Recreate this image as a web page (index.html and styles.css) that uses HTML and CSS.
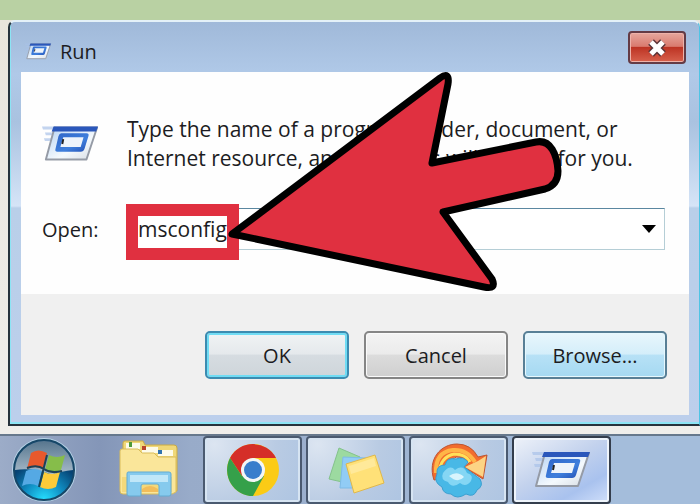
FILE: index.html
```html
<!doctype html>
<html lang="en">
<head>
	<meta charset="UTF-8">
	<title>Run</title>
	<link rel="stylesheet" href="styles.css">
</head>
<body>
	<svg class="defs" width="0" height="0" aria-hidden="true">
		<defs>
			<linearGradient id="frameBlue" x1="0" y1="0" x2="1" y2="1">
				<stop offset="0" stop-color="#2f66c8"/>
				<stop offset=".6" stop-color="#3f7fdc"/>
				<stop offset="1" stop-color="#2450b4"/>
			</linearGradient>
			<linearGradient id="paper" x1="0" y1="0" x2="1" y2="1">
				<stop offset="0" stop-color="#b4d2f4"/>
				<stop offset=".6" stop-color="#f4f9fd"/>
				<stop offset="1" stop-color="#d5dbe2"/>
			</linearGradient>
			<symbol id="runIcon" viewBox="0 0 60 40">
				<path d="M0 2h14l-1 3H1zM3 8h9l-1 3H4zM2 14h8l-2 3H3z" fill="#a9c2e8" opacity=".7"/>
				<path d="M13 3h44L46 36H4z" fill="url(#paper)" stroke="#959ba6" stroke-width="2" stroke-linejoin="round"/>
				<path d="M12 2h46l-2 5H10z" fill="#2a57bb"/>
				<path d="M20 9h26q3 0 2 3l-4 13q-1 3-4 3H16q-3 0-2-3l3-13q1-3 3-3z" fill="url(#frameBlue)"/>
				<path d="M22 13h21l-3 10H19z" fill="#eef4fb"/>
				<path d="M22 15l-1 5" stroke="#222" stroke-width="2"/>
			</symbol>
		</defs>
	</svg>

	<div class="wallpaper"></div>
	<div class="desktop">
		<div class="window">
			<div class="titlebar">
				<svg class="title_icon"><use href="#runIcon"/></svg>
				<span class="title">Run</span>
				<button class="close" aria-label="Close">
					<svg width="22" height="20" viewBox="0 0 22 20">
						<path d="M5 4l12 12M17 4L5 16" stroke="#5c3438" stroke-width="8"/>
						<path d="M5 4l12 12M17 4L5 16" stroke="#fff" stroke-width="5"/>
					</svg>
				</button>
			</div>
			<form class="content" onsubmit="return false">
				<div class="main">
					<svg class="run_icon"><use href="#runIcon"/></svg>
					<p class="info">Type the name of a program, folder, document, or<br>Internet resource, and Windows will open it for you.</p>
					<label for="open">Open:</label>
					<div class="combo">
						<input type="text" id="open" value="msconfig">
						<button type="button" class="drop" aria-label="Show list">
							<svg width="14" height="8" viewBox="0 0 14 8"><path d="M0 0h14L7 8z"/></svg>
						</button>
						<span class="mark"></span>
						<svg class="arrow" viewBox="220 60 350 240">
							<path d="M232 234L440 78Q450 71 448 84L432 163L536 142C551 139 557 155 558 171Q558 185 545 189L443 212L492 279Q497 290 484 287Z" fill="#e03040" stroke="#000" stroke-width="7" stroke-linejoin="round"/>
						</svg>
					</div>
				</div>
				<div class="buttons">
					<button class="btn default">OK</button>
					<button type="button" class="btn">Cancel</button>
					<button type="button" class="btn hot">Browse...</button>
				</div>
			</form>
		</div>
	</div>

	<div class="taskbar">
		<button class="start" aria-label="Start">
			<svg width="66" height="66" viewBox="0 0 66 66">
				<defs>
					<linearGradient id="orbTop" x1="0" y1="0" x2="0" y2="1">
						<stop offset="0" stop-color="#57768e"/>
						<stop offset="1" stop-color="#a9bccb"/>
					</linearGradient>
					<radialGradient id="orbLow" cx=".5" cy="1" r=".65">
						<stop offset="0" stop-color="#26e0ff"/>
						<stop offset=".5" stop-color="#108fc4"/>
						<stop offset="1" stop-color="#064273"/>
					</radialGradient>
				</defs>
				<circle cx="33" cy="33" r="32" fill="#b8d4e8"/>
				<circle cx="33" cy="33" r="30" fill="url(#orbLow)" stroke="#174767" stroke-width="2"/>
				<path d="M4 33a29 29 0 0 1 58 0q-12 1-20 5-20-8-38-5z" fill="url(#orbTop)"/>
				<path d="M20 16q7-5 16 0l-4 16q-8-4-16 0z" fill="#e7592d"/>
				<path d="M38 18q8 4 16 0l-4 15q-8 4-16 0z" fill="#86bd4a"/>
				<path d="M15 34q8-4 16 0l-4 15q-8-4-16 0z" fill="#55a9e4"/>
				<path d="M33 35q8 4 16 0l-4 15q-8 4-16 0z" fill="#fccb39"/>
				<path d="M16 31q10-4 17 1t18 2M36 18L28 50" fill="none" stroke="#1d4256" stroke-width="2"/>
			</svg>
		</button>
		<button class="pin" aria-label="Windows Explorer">
			<svg width="62" height="62" viewBox="0 0 62 62">
				<path d="M5 4q0-2 2-2h18l2 4h29q3 0 3 3v43H5z" fill="#f0d878" stroke="#c9aa45"/>
				<path d="M8 4h14v6H8zM24 8h16v6H24zM40 11h15v6H40z" fill="#fdfbe9"/>
				<path d="M11 3h3v5h-3z" fill="#4f9a38"/>
				<path d="M24 7h4v4h-4z" fill="#b8442c"/>
				<path d="M40 11h4v4h-4z" fill="#3073ae"/>
				<path d="M2 12q0-2 2-2h16l4 4h12l4 4h18v35l-4 2H5q-3 0-3-3z" fill="#fae69a" stroke="#d9bc5a"/>
				<path d="M4 38h50v15H4z" fill="#f4d97b"/>
				<path d="M10 33h41q2 0 2 2v20q0 2-2 2H41V47q0-2-2-2H25q-2 0-2 2v10H11q-2 0-2-2V35q0-2 1-2z" fill="#86caed" stroke="#63abd2"/>
				<path d="M12 36h38v7H12z" fill="#c0e7f8"/>
				<path d="M24 50q8-6 16 0v3H24z" fill="#f2bd5a"/>
			</svg>
		</button>
		<button class="task" aria-label="Google Chrome">
			<svg width="56" height="56" viewBox="0 0 56 56">
				<circle cx="28" cy="28" r="26" fill="#fbcb16"/>
				<path d="M5 16A26 26 0 0 1 51 16H28L17 34z" fill="#d52e28"/>
				<path d="M5 16A26 26 0 0 0 28 54L39 34H17z" fill="#35a04a"/>
				<circle cx="28" cy="28" r="12" fill="#f4f6f6"/>
				<circle cx="28" cy="28" r="9" fill="#397dcc"/>
			</svg>
		</button>
		<button class="task" aria-label="Sticky Notes">
			<svg width="60" height="56" viewBox="0 0 60 56">
				<path d="M13 6l21 9-9 27L3 37z" fill="#9cdaa0" stroke="#84c28c"/>
				<path d="M17 15l23 1v30H14z" fill="#91ccf5" stroke="#7dbbe6"/>
				<path d="M20 22l29-9 9 28-30 10z" fill="#ffe178" stroke="#e0b84b"/>
				<path d="M23 24l25-8 2 8-25 8z" fill="#ffe99a"/>
			</svg>
		</button>
		<button class="task" aria-label="Cloud">
			<svg width="60" height="56" viewBox="0 0 60 56">
				<path d="M5 38C-2 17 12 2 28 2q14 0 21 13l9-2-4 24-19-12 6-5Q26 8 17 24q-6 5-7 13z" fill="#f26c2e" stroke="#bc5532"/>
				<path d="M7 31Q6 10 24 8q14-1 22 12" fill="none" stroke="#ffb547" stroke-width="4"/>
				<path d="M10 32Q11 15 25 12q12 0 16 8" fill="none" stroke="#ffe05a" stroke-width="3"/>
				<path d="M36 25l13-6 8-5-3 21z" fill="#fcd485"/>
				<path d="M13 45Q4 40 8 32q-1-9 8-9 2-8 11-6 7-3 12 3l-4 5 16 12q4 7-3 11-3 8-11 4-9 6-15 0-8 0-9-7z" fill="#48b8e6" stroke="#3b9fd0"/>
				<path d="M14 31q7-9 12-3 8-6 12 3 7 2 4 8-5 7-11 2-8 6-12-1-8-2-5-9z" fill="#84d6f4"/>
				<path d="M20 34q8-6 15 1-6 7-15-1z" fill="#d8f4fd"/>
			</svg>
		</button>
		<button class="task active" aria-label="Run">
			<svg width="60" height="40"><use href="#runIcon"/></svg>
		</button>
	</div>
</body>
</html>
```

FILE: styles.css
```css
*{
	box-sizing: border-box;
	margin: 0;
	padding: 0;
}
body{
	display: flex;
	flex-direction: column;
	min-height: 100vh;
	background: #eeece8;
	font-family: "Noto Sans", "Open Sans", sans-serif;
	font-family: "Open Sans", "Noto Sans", sans-serif;
	font-size: 20px;
	color: #1c1c22;
}
button,input{
	font: inherit;
	color: inherit;
}
svg{
	display: block;
	flex-shrink: 0;
}
.defs{
	position: absolute;
}
.wallpaper{
	height: 20px;
	background: #b9d1a3;
}
.desktop{
	flex: 1;
	padding: 0 0 7px 8px;
	background: linear-gradient(#e9e5dc, #efeeeb);
}
.window{
	padding: 0 10px 9px 11px;
	border: 2px solid #26323c;
	border-top-color: #e4f1f8;
	border-right: 1px solid #4fc4e4;
	border-radius: 7px 7px 0 0;
	background: linear-gradient(#a0b9d9, #b0c9e8 52px, #a9c2e0 100px, #d5e4f7 184px, #b9cfe9 186px, #bccfec);
	box-shadow: inset 1px -2px 0 #8ce4f4;
}
.titlebar{
	display: flex;
	align-items: center;
	height: 50px;
	padding: 9px 3px 0 4px;
}
.title_icon{
	width: 27px;
	height: 19px;
}
.title{
	flex: 1;
	padding: 0 8px;
}
.close{
	display: flex;
	align-items: center;
	justify-content: center;
	width: 58px;
	height: 33px;
	margin-bottom: 8px;
	border: 2px solid #643b45;
	border-radius: 4px;
	background: linear-gradient(#e6a79d, #d97a6e 46%, #bd3424 50%, #d7614d);
	box-shadow: inset 0 0 0 1px #eeb2a9;
}
.content{
	background: #f0f0f0;
}
.main{
	display: grid;
	grid-template-columns: 85px 1fr;
	row-gap: 35px;
	align-items: center;
	padding: 43px 24px 44px 21px;
	background: #fefefe;
}
.run_icon{
	width: 58px;
	height: 40px;
}
.info{
	font-size: 21px;
	line-height: 29px;
	white-space: nowrap;
}
.combo{
	position: relative;
	display: flex;
	height: 42px;
	border: 1px solid #b5ced6;
	border-top-color: #5a87a0;
	background: #fff;
}
.combo input{
	flex: 1;
	min-width: 0;
	padding: 0 10px;
	border: none;
	outline: none;
	background: none;
	font-size: 21px;
}
.drop{
	display: flex;
	align-items: center;
	justify-content: center;
	width: 30px;
	border: none;
	background: none;
}
/* red frame round the typed command */
.mark{
	position: absolute;
	left: -2px;
	top: -5px;
	width: 113px;
	height: 56px;
	border: 12px solid #e03040;
}
.arrow{
	position: absolute;
	left: 92px;
	top: -149px;
	width: 350px;
	height: 240px;
	pointer-events: none;
}
.buttons{
	display: flex;
	justify-content: flex-end;
	gap: 15px;
	padding: 37px 22px 36px;
}
.btn{
	width: 144px;
	height: 48px;
	border: 2px solid #858585;
	border-radius: 5px;
	background: linear-gradient(#f3f3f3, #ebebeb 48%, #dcdcdc 50%, #cfcfcf);
	box-shadow: inset 0 0 0 1px #fafafa;
}
.btn.default{
	border-color: #3c8bb0;
	background: linear-gradient(#f0f3f4, #e5e9ec 48%, #d6dce1 50%, #ced5da);
	box-shadow: inset 0 0 0 2px #70dcf4;
}
.btn.hot{
	border-color: #587f96;
	background: linear-gradient(#e8f6fc, #d4eefa 48%, #b7e1f6 50%, #a5d9f2);
	box-shadow: inset 0 0 0 1px #e6f8fe;
}
.taskbar{
	display: flex;
	gap: 4px;
	height: 70px;
	border-top: 2px solid #66788c;
	background: linear-gradient(90deg, #9cacc8, #8496b8 100px, #98abc9 190px, #a4bddb 620px);
}
.start,.pin,.task{
	display: flex;
	align-items: center;
	justify-content: center;
	border: none;
	background: none;
}
.start{
	width: 87px;
}
.pin{
	width: 108px;
	padding-left: 8px;
}
.task{
	width: 99px;
	border: 2px solid #4a5a70;
	border-radius: 4px;
	background: radial-gradient(circle at 10% 10%, #dce5f1, #b9cbe3 60%, #aec5e2);
	box-shadow: inset 0 0 0 2px #d6e4f2;
}
.task.active{
	border-color: #333d4c;
	background: linear-gradient(150deg, #eef2f9, #c3d2ed 45%, #a9c2ee 75%, #d0dffa);
	box-shadow: inset 0 0 0 2px #eef4fb;
}
```
